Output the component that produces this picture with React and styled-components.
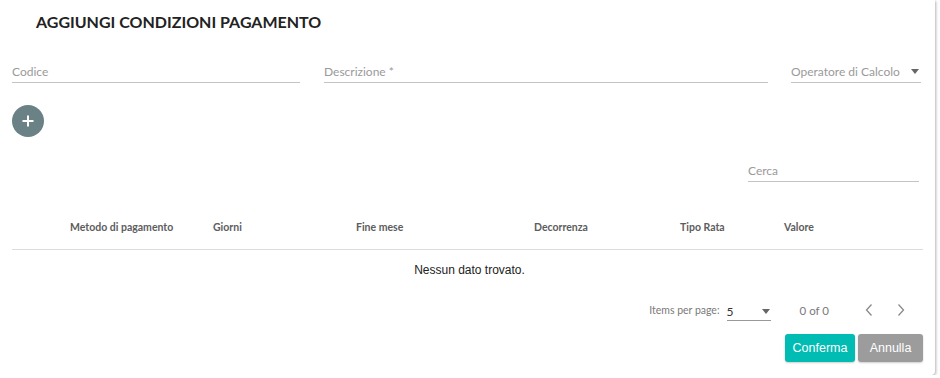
import React from "react";
import styled, { createGlobalStyle } from "styled-components";

const GlobalStyle = createGlobalStyle`
  html, body {
    margin: 0;
    padding: 0;
    background: #ffffff;
  }
  body {
    font-family: Lato, "Open Sans", sans-serif;
  }
`;

const Card = styled.div`
  position: relative;
  width: 935px;
  height: 375px;
  box-sizing: border-box;
  background: #fff;
  border-radius: 0 0 4px 0;
  box-shadow: 1px 1px 3px rgba(0, 0, 0, 0.3);
  padding: 0 12px 0 12px;
  display: flex;
  flex-direction: column;
`;

const Title = styled.h2`
  margin: 0;
  padding: 11px 0 0 24px;
  height: 32px;
  font-family: Lato, sans-serif;
  font-size: 16px;
  font-weight: 700;
  color: #222;
  line-height: 22px;
  letter-spacing: 0;
`;

const FieldRow = styled.div`
  display: flex;
  margin-top: 19px;
  padding-right: 2px;
`;

const Field = styled.div`
  width: ${(p) => p.w}px;
  margin-left: ${(p) => p.gap || 0}px;
  height: 19px;
  border-bottom: 1px solid #c4c4c4;
  display: flex;
  align-items: center;
  justify-content: space-between;
  font-size: 12px;
  color: #9a9a9a;
  padding-bottom: 1px;
`;

const Caret = styled.span`
  width: 0;
  height: 0;
  border-left: 4.5px solid transparent;
  border-right: 4.5px solid transparent;
  border-top: 5px solid #666;
  margin-right: ${(p) => p.mr || 0}px;
`;

const AddButton = styled.button`
  margin-top: 22px;
  width: 32px;
  height: 32px;
  border-radius: 50%;
  border: none;
  background: #6a8186;
  color: #fff;
  padding: 0;
  display: flex;
  align-items: center;
  justify-content: center;
`;

const SearchRow = styled.div`
  display: flex;
  justify-content: flex-end;
  margin-top: 24px;
  padding-right: 4px;
`;

const HeadRow = styled.div`
  display: grid;
  grid-template-columns: 58px 143px 143px 178px 146px 104px 1fr;
  height: 45px;
  margin-top: 22px;
  align-items: center;
  border-bottom: 1px solid #dcdcdc;
`;

const HeadCell = styled.div`
  font-size: 10.5px;
  font-weight: 700;
  color: #5d5d5d;
`;

const Empty = styled.div`
  text-align: center;
  font-family: "Liberation Sans", Arial, sans-serif;
  font-size: 12px;
  color: #222;
  margin-top: 13px;
  padding-left: 4px;
`;

const Pager = styled.div`
  display: flex;
  align-items: center;
  justify-content: flex-end;
  margin-top: 23px;
  height: 20px;
  font-size: 10.5px;
  color: #7a7a7a;
  padding-right: 6px;
`;

const PageSelect = styled.div`
  width: 44px;
  margin-left: 7px;
  height: 18px;
  border-bottom: 1px solid #999;
  display: flex;
  align-items: center;
  justify-content: space-between;
  color: #333;
  font-size: 12px;
  margin-top: 3px;
`;

const Range = styled.span`
  margin-left: 29px;
  margin-right: 24px;
  font-size: 11.5px;
`;

const NavBtn = styled.span`
  width: 32px;
  display: flex;
  justify-content: center;
`;

const Actions = styled.div`
  display: flex;
  justify-content: flex-end;
  gap: 3px;
  margin-top: 14px;
`;

const Btn = styled.button`
  height: 28px;
  width: ${(p) => p.w}px;
  border: none;
  border-radius: 3px;
  background: ${(p) => p.bg};
  color: #fff;
  font-family: "Liberation Sans", Arial, sans-serif;
  font-size: 12.5px;
  box-shadow: 0 1px 2px rgba(0, 0, 0, 0.2);
  padding: 0;
`;

const Chevron = ({ left }) => (
  <svg width="10" height="14" viewBox="0 0 10 14">
    <path
      d={left ? "M7.5 1.5 L2.5 7 L7.5 12.5" : "M2.5 1.5 L7.5 7 L2.5 12.5"}
      fill="none"
      stroke="#8a8a8a"
      strokeWidth="1.3"
    />
  </svg>
);

const columns = [
  "",
  "Metodo di pagamento",
  "Giorni",
  "Fine mese",
  "Decorrenza",
  "Tipo Rata",
  "Valore",
];

export default function App() {
  return (
    <>
      <GlobalStyle />
      <Card>
        <Title>AGGIUNGI CONDIZIONI PAGAMENTO</Title>
        <FieldRow>
          <Field w={288}>Codice</Field>
          <Field w={444} gap={24}>
            Descrizione *
          </Field>
          <Field w={130} gap={23}>
            Operatore di Calcolo
            <Caret mr={2} />
          </Field>
        </FieldRow>
        <AddButton>
          <svg width="14" height="14" viewBox="0 0 14 14">
            <path d="M7 1.5 V12.5 M1.5 7 H12.5" stroke="#fff" strokeWidth="2" />
          </svg>
        </AddButton>
        <SearchRow>
          <Field w={171}>Cerca</Field>
        </SearchRow>
        <HeadRow>
          {columns.map((c, i) => (
            <HeadCell key={i}>{c}</HeadCell>
          ))}
        </HeadRow>
        <Empty>Nessun dato trovato.</Empty>
        <Pager>
          Items per page:
          <PageSelect>
            5
            <Caret mr={1} />
          </PageSelect>
          <Range>0 of 0</Range>
          <NavBtn>
            <Chevron left />
          </NavBtn>
          <NavBtn>
            <Chevron />
          </NavBtn>
        </Pager>
        <Actions>
          <Btn w={70} bg="#00bcb2">
            Conferma
          </Btn>
          <Btn w={65} bg="#9c9c9c">
            Annulla
          </Btn>
        </Actions>
      </Card>
    </>
  );
}
